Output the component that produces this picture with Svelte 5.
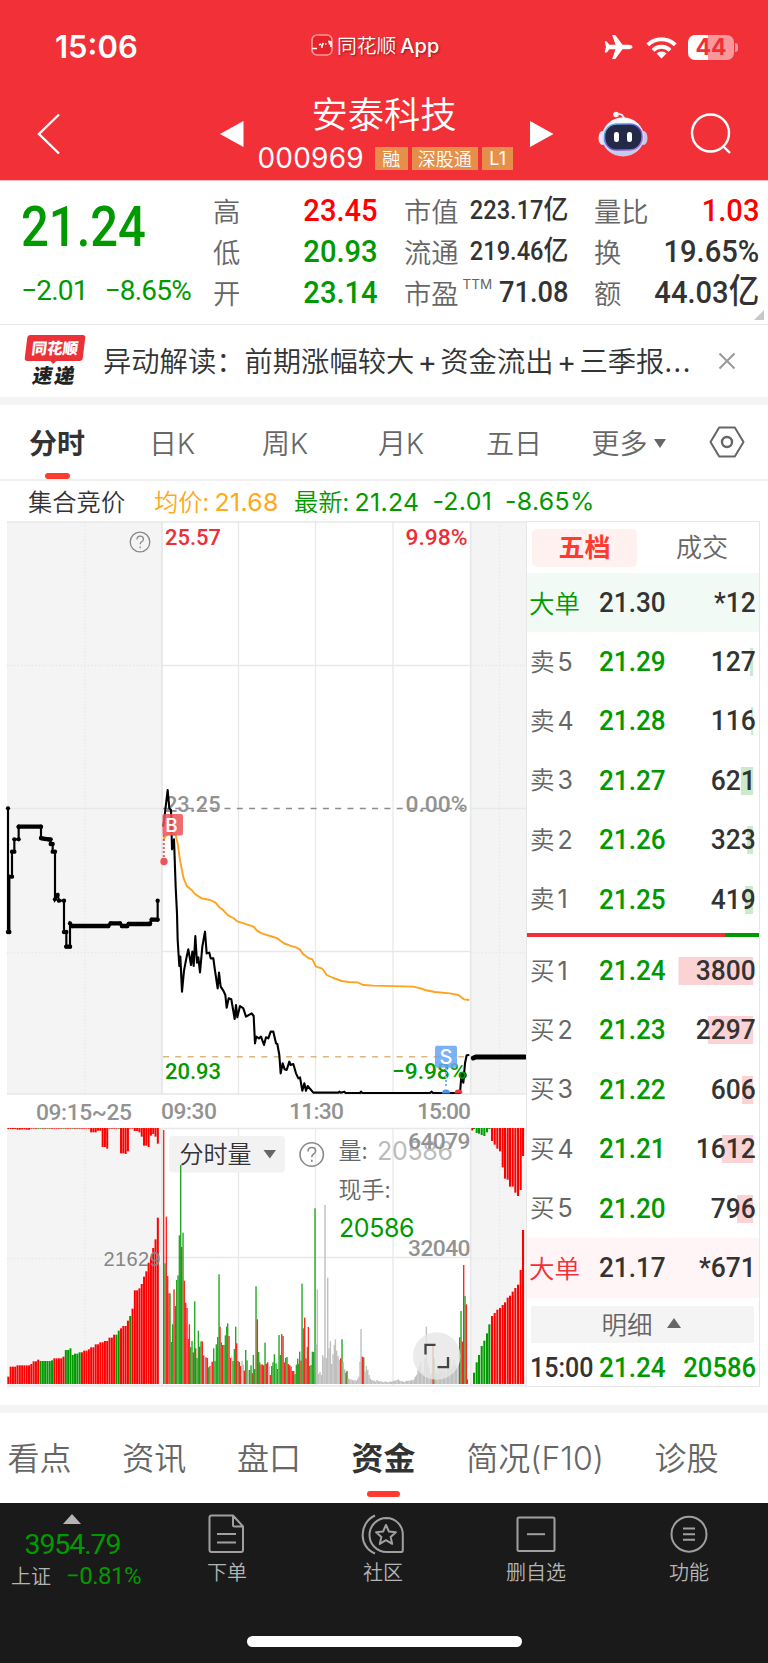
<script>
  const stats = [
    { label: '高', value: '23.45', tone: 'up' },
    { label: '市值', value: '223.17', unit: '亿', size: 'small' },
    { label: '量比', value: '1.03', tone: 'up' },
    { label: '低', value: '20.93', tone: 'down' },
    { label: '流通', value: '219.46', unit: '亿', size: 'small' },
    { label: '换', value: '19.65%' },
    { label: '开', value: '23.14', tone: 'down' },
    { label: '市盈', sup: 'TTM', value: '71.08', size: 'medium' },
    { label: '额', value: '44.03', unit: '亿' }
  ];

  const periods = ['分时', '日K', '周K', '月K', '五日'];

  const asks = [
    { level: 5, price: '21.29', volume: 127, depth: 3 },
    { level: 4, price: '21.28', volume: 116, depth: 2 },
    { level: 3, price: '21.27', volume: 621, depth: 12 },
    { level: 2, price: '21.26', volume: 323, depth: 6 },
    { level: 1, price: '21.25', volume: 419, depth: 8 }
  ];

  const bids = [
    { level: 1, price: '21.24', volume: 3800, depth: 74 },
    { level: 2, price: '21.23', volume: 2297, depth: 45 },
    { level: 3, price: '21.22', volume: 606, depth: 11 },
    { level: 4, price: '21.21', volume: 1612, depth: 31 },
    { level: 5, price: '21.20', volume: 796, depth: 16 }
  ];

  const sections = ['看点', '资讯', '盘口', '资金', '简况(F10)', '诊股'];

  // Chart series are stored in 3x units, the groups that draw them scale back down
  const auctionLine =
    '24,85 24,456 28,456 28,290 36,290 36,215 43,215 43,178 56,178 56,140 123,140 123,174 145,178 152,178 152,192 158,192 158,215 165,215 165,358 173,345 177,362 192,362 192,456 199,456 199,500 210,500 210,430 217,438 325,438 332,430 360,430 366,438 380,438 386,432 450,430 455,419 473,419 473,362';
  const auctionDots = auctionLine.split(' ').map((p) => p.split(','));

  const priceLine =
    '490,140 503,30 508,85 513,90 516,208 522,178 527,320 531,400 533,480 538,558 541,530 546,635 552,572 560,530 565,508 573,555 577,515 581,558 586,468 591,548 595,532 600,577 607,500 615,455 620,520 628,518 632,535 640,535 645,572 653,625 657,578 662,620 670,632 676,645 680,683 686,655 694,658 704,717 708,675 712,712 720,678 730,685 738,710 755,700 761,708 765,790 769,770 777,775 783,770 792,795 798,772 805,775 812,755 820,755 828,790 832,792 838,825 842,880 848,850 854,868 860,870 868,845 872,855 880,852 888,880 895,895 900,892 907,932 913,910 918,932 923,918 940,938 1015,938 1018,935 1022,938 1033,935 1037,939 1080,939 1083,935 1087,939 1290,939 1295,935 1299,939 1380,939 1384,890 1390,908 1395,850 1400,826 1408,825';
  const averageLine =
    '490,178 500,165 510,160 527,165 533,190 540,240 550,292 560,318 575,330 585,342 605,355 630,360 647,368 658,382 670,391 684,406 700,414 712,424 740,433 761,440 770,451 785,460 820,471 832,475 850,489 870,497 890,503 900,509 910,523 925,534 937,538 948,560 967,566 980,585 1000,594 1025,603 1045,606 1073,607 1090,615 1120,617 1240,620 1265,626 1275,630 1305,636 1350,640 1375,645 1392,658 1408,660';

  // "<x><colour><top>": r = up, g = down, x = flat
  const volumeData =
    '491r60 495g460 499r320 503r498 507r550 510g550 514g696 518g643 522r538 526r588 530g510 534g496 538g376 542g165 545r411 549g368 553r512 557r578 561r594 565r687 568r643 572g711 576g693 580r727 584g574 587r715 591g744 595g662 599r710 603g694 607r694 611r736 614x740 618r742 622r744 626g772 630r768 634x757 637r755 641g715 645g753 649g703 653g681 657g493 660r650 664g697 668r705 672g705 676g676 680g650 683g640 687r678 691r744 695x740 699g753 703g717 707g650 710r700 714g753 718r756 722r768 726x752 730x764 733r782 737g720 741g751 745x780 749g780 753g766 757r790 760g735 764g777 768g529 772r628 776g726 779g757 783r764 787r763 791r766 795g698 799r761 803r757 807x770 811r795 815g768 819g757 823g733 828g760 832g777 837g675 841g735 845g672 849r678 853r757 857g744 861g741 865r762 869r766 873r770 877r783 881r783 885g792 889g764 893g746 896g762 899g725 903r752 906g521 910g655 914r623 918r745 922g711 925r651 929g768 933g765 937g725 941g726 945g295 949x702 952x538 956x792 960x786 964x795 968x736 972x742 975x285 979x744 983x503 987x715 991x694 995x762 999x733 1003x705 1006x688 1010x722 1014x738 1018x750 1022r745 1026g688 1030x757 1034x778 1038r788 1041g783 1045x805 1049x808 1053x808 1057x810 1061x811 1065x811 1069x812 1073x806 1077x800 1080x755 1083x657 1087r740 1091g742 1095x785 1099x768 1103x780 1107x795 1111x806 1115x810 1119x812 1123x812 1127x815 1131x810 1135x813 1139x815 1143x813 1147x816 1151x817 1155x814 1159x815 1163x817 1167x816 1171x814 1175x816 1179x813 1183x812 1187x812 1191x810 1195x808 1199x812 1203x814 1207x813 1211x816 1215x815 1219x812 1223x813 1227x812 1231x812 1235x810 1239x811 1243x808 1246x800 1250x795 1254x780 1258x768 1262x755 1266x785 1270x790 1274x745 1279x650 1283x760 1287x775 1291x795 1295x790 1299r705 1302g745 1306x790 1310x780 1314x790 1318x765 1322x782 1326x770 1330x785 1334x776 1338x790 1342x766 1346x752 1350x745 1354x778 1358x765 1362x750 1366x765 1370x772 1375x765 1379r682 1383g603 1387r695 1391r465 1395g558 1399r583 1402r808';
  const parse = (data) =>
    data.split(' ').map((item) => {
      const [, x, tone, y] = item.match(/(\d+)([rgx])(\d+)/);
      return { x: +x, tone, y: +y };
    });
  const volumes = parse(volumeData);

  const auctionSteps = [
    [22, 800], [25, 770], [46, 766], [88, 762], [94, 754], [107, 749], [116, 753], [149, 751], [156, 745], [182, 740], [190, 720], [204, 715], [210, 735], [217, 731], [231, 727], [245, 722], [258, 718], [271, 712], [285, 703], [298, 697], [312, 693], [326, 683], [340, 674], [350, 662], [360, 655], [368, 648], [375, 632], [382, 618], [394, 596], [402, 541], [412, 535], [420, 522], [429, 500], [436, 484], [443, 458], [450, 440], [456, 414], [463, 388], [470, 323]
  ];
  const greenRanges = [[113, 147], [153, 159], [189, 209], [214, 238], [346, 360], [381, 388]];
  const topSteps = [
    [22, 57], [50, 59], [64, 58], [78, 59], [92, 56], [265, 67], [292, 62], [300, 111], [314, 116], [326, 56], [361, 130], [369, 132], [376, 124], [383, 56], [402, 63], [411, 67], [423, 80], [430, 107], [443, 111], [449, 77], [457, 72], [464, 80], [470, 101]
  ];
  const stepAt = (steps, x) => steps.filter((s) => s[0] <= x + 1).pop()[1];
  const auctionBars = Array.from({ length: 66 }, (_, i) => {
    const x = 22 + i * 6.9;
    return {
      x,
      y: stepAt(auctionSteps, x),
      top: stepAt(topSteps, x),
      green: greenRanges.some(([a, b]) => x >= a && x < b),
      topGreen: [13, 14, 17, 24, 28, 48].includes(i)
    };
  });

  const closeBottom = parse(
    '1422g788 1430g757 1437g735 1445g708 1453g692 1461g670 1468g643 1476r618 1484r609 1492r599 1500r594 1508r585 1515r577 1523r563 1530r557 1538r545 1546r534 1554r524 1562r480 1569r360'
  );
  const closeTop = parse(
    '1417r61 1422g57 1430g69 1437g71 1445g75 1453g78 1461g67 1468g57 1476r93 1484r104 1492r116 1500r124 1508r172 1515r206 1523r209 1530r230 1538r230 1546r248 1554r258 1562r240 1569r138'
  );
</script>

<div class="page">
  <header>
    <div class="status">
      <span class="clock">15:06</span>
      <div class="brand">
        <svg width="22" height="22" viewBox="0 0 22 22">
          <rect x="1" y="1" width="20" height="20" rx="5" fill="#e8222b" stroke="#f99" stroke-width="1.6" />
          <path d="M1 14.500h5M8 11l2-1M11 11.500l1.500-2.500M11 11v3M14 10h1.500M17 7.500h1.500v3M20 7v6" stroke="#fff" stroke-width="1.600" fill="none" />
        </svg>
        <span>同花顺<b>App</b></span>
      </div>
      <div class="signals">
        <svg width="29" height="26" viewBox="0 0 29 26" fill="#fff">
          <path d="M28.5 13c0 1.4-2 2.2-4 2.2h-6L11.3 25H8.2l3.3-9.8H5.3L2.8 18.4H.7L2 13 .7 7.6h2.1l2.5 3.2h6.2L8.2 1h3.1l7.2 9.8h6c2 0 4 .8 4 2.2z" />
        </svg>
        <svg width="31" height="23" viewBox="0 0 31 23" fill="none" stroke="#fff" stroke-width="4">
          <path d="M1.8 8.8a19.4 19.4 0 0 1 27.4 0" />
          <path d="M7 14.4a12 12 0 0 1 17 0" />
          <path d="M15.5 22.5l-5-5a7 7 0 0 1 10 0z" fill="#fff" stroke="none" />
        </svg>
        <div class="battery"><span>44</span></div>
      </div>
    </div>
    <nav>
      <svg class="back" width="24" height="42" viewBox="0 0 24 42" fill="none" stroke="#fff" stroke-width="2.4">
        <path d="M22 1.5L2 21l20 19.500" />
      </svg>
      <svg width="24" height="26" viewBox="0 0 24 26"><path d="M0 13L23.500 0v26z" fill="#fff" /></svg>
      <div class="title">
        <h1>安泰科技</h1>
        <div class="code">
          <span>000969</span>
          <i>融</i><i>深股通</i><i>L1</i>
        </div>
      </div>
      <svg width="24" height="26" viewBox="0 0 24 26"><path d="M23.500 13L0 0v26z" fill="#fff" /></svg>
      <svg class="robot" width="50" height="46" viewBox="0 0 50 46">
        <defs>
          <linearGradient id="shell" x1="0" y1="0" x2="0" y2="1">
            <stop offset="0" stop-color="#fff" />
            <stop offset="1" stop-color="#c3c8ea" />
          </linearGradient>
          <linearGradient id="rim" x1="0" y1="0" x2="1" y2="1">
            <stop offset="0" stop-color="#62c8e8" />
            <stop offset=".6" stop-color="#6a4be0" />
            <stop offset="1" stop-color="#b48cf0" />
          </linearGradient>
        </defs>
        <path d="M18 3q8-1 8 6" fill="none" stroke="#e4e4f4" stroke-width="2" />
        <circle cx="18" cy="3.500" r="2.800" fill="#f2f0fa" />
        <ellipse cx="4.500" cy="27" rx="4" ry="7" fill="#e6e8fa" />
        <ellipse cx="45.500" cy="27" rx="4" ry="7" fill="#c5caee" />
        <ellipse cx="25" cy="26" rx="21" ry="19.500" fill="url(#shell)" />
        <rect x="6.500" y="13" width="37.500" height="26" rx="12" fill="#232946" stroke="url(#rim)" stroke-width="1.600" />
        <rect x="16" y="21" width="5" height="10" rx="2.300" fill="#fff" />
        <rect x="29" y="21" width="5" height="10" rx="2.300" fill="#fff" />
      </svg>
      <svg class="search" width="42" height="42" viewBox="0 0 42 42" fill="none" stroke="#fff" stroke-width="2.400">
        <circle cx="20.500" cy="20" r="18.500" />
        <path d="M33 33l7 7" />
      </svg>
    </nav>
  </header>

  <section class="quote">
    <div class="last down">
      <strong>21.24</strong>
      <div><span>−2.01</span><span>−8.65%</span></div>
    </div>
    <div class="stats">
      {#each stats as stat}
        <div class="stat">
          <label>{stat.label}{#if stat.sup}<sup>{stat.sup}</sup>{/if}</label>
          <span class="num {stat.tone ?? ''} {stat.size ?? ''}">{stat.value}{#if stat.unit}<em>{stat.unit}</em>{/if}</span>
        </div>
      {/each}
    </div>
    <svg class="corner" width="10" height="10" viewBox="0 0 10 10"><path d="M10 0v10H0z" fill="#c8c8c8" /></svg>
  </section>

  <section class="news">
    <div class="express">
      <div class="bubble"><span>同花顺</span></div>
      <b>速递</b>
    </div>
    <p>异动解读：前期涨幅较大<i>+</i>资金流出<i>+</i>三季报<u>...</u></p>
    <svg width="18" height="18" viewBox="0 0 18 18" stroke="#999" stroke-width="2"><path d="M1.500 1.500l15 15M16.500 1.500l-15 15" /></svg>
  </section>

  <section class="periods">
    {#each periods as period, i}
      <div class="period" class:active={i === 0}>{period}</div>
    {/each}
    <div class="period">更多<svg width="12" height="9" viewBox="0 0 12 9"><path d="M0 0h12L6 9z" fill="#666" /></svg></div>
    <div class="period">
      <svg class="gear" width="36" height="32" viewBox="0 0 36 32" fill="none" stroke="#666" stroke-width="2">
        <path d="M10.200 1.500h15.600L34.500 16l-8.700 14.500H10.200L1.500 16z" stroke-linejoin="round" />
        <circle cx="18" cy="16" r="5" stroke-width="2.400" />
      </svg>
    </div>
  </section>

  <div class="legend">
    <span class="mode">集合竞价</span>
    <span class="avg">均价: <b>21.68</b></span>
    <span class="down">最新: <b>21.24</b></span>
    <b class="down">-2.01</b>
    <b class="down">-8.65%</b>
  </div>

  <section class="market">
    <svg class="chart" width="526" height="868" viewBox="0 521 526 868">
      <!-- panels and grid -->
      <g fill="#f4f4f4">
        <rect x="7" y="522" width="155" height="572" />
        <rect x="471" y="522" width="55" height="572" />
        <rect x="7" y="1128" width="155" height="257" />
        <rect x="471" y="1128" width="55" height="257" />
      </g>
      <g stroke="#e8e8e8" stroke-width="1.300" fill="none">
        <path d="M7 522H526M162 665.500H470M7 808.500H162M471 808.500H526M162 951.500H470M7 1094H526" />
        <path d="M7 1128.500H526M162 1257.500H470M7 1386H526" />
        <path d="M238.500 522V1094M315.500 522V1094M393 522V1094M238.500 1128V1386M315.500 1128V1386M393 1128V1386" />
        <path d="M162 522V1094M470.700 522V1094M162 1128V1386M470.700 1128V1386" stroke-width="1.800" />
        <path d="M85 522V1096M499.500 522V1096M7 665.500H162M471 665.500H526M7 952.500H162M471 952.500H526M85 1128V1386M499.500 1128V1386M7 1258.500H162M471 1258.500H526" stroke-dasharray="1.500 2" />
      </g>
      <path d="M163 808.500H470" stroke="#8c8c8c" stroke-width="1.300" stroke-dasharray="6 6.300" />
      <path d="M163 1056.700H470" stroke="#dfb57f" stroke-width="1.500" stroke-dasharray="6 6.300" />

      <g class="din" font-size="22.800">
        <text class="red" x="165" y="545" textLength="56" lengthAdjust="spacingAndGlyphs">25.57</text>
        <text class="red" x="405.500" y="545" textLength="62" lengthAdjust="spacingAndGlyphs">9.98%</text>
        <text class="axis" x="165" y="812" textLength="55.500" lengthAdjust="spacingAndGlyphs">23.25</text>
        <text class="axis" x="405.500" y="812" textLength="62" lengthAdjust="spacingAndGlyphs">0.00%</text>
        <text class="axis" x="36" y="1120" textLength="96">09:15~25</text>
        <text class="axis" x="161" y="1119" textLength="56">09:30</text>
        <text class="axis" x="289" y="1119" textLength="55">11:30</text>
        <text class="axis" x="417" y="1119" textLength="54">15:00</text>
      </g>

      <!-- price lines -->
      <g transform="translate(0 780) scale(.33333)">
        <polyline points={auctionLine} fill="none" stroke="#000" stroke-width="6.500" />
        {#each auctionDots as [x, y]}
          <circle cx={x} cy={y} r="6.500" />
        {/each}
        <path d="M56 140H122M199 500H210M215 438H325M332 430H360M366 438H382M386 432H450M455 419H472M125 175L150 179" stroke="#000" stroke-width="13" stroke-linecap="round" />
        <path d="M1420 834L1428 831H1574" fill="none" stroke="#000" stroke-width="15" stroke-linecap="round" />
        <polyline points={priceLine} fill="none" stroke="#000" stroke-width="6.300" stroke-linejoin="round" />
        <polyline points={averageLine} fill="none" stroke="#ffa21f" stroke-width="5.700" stroke-linejoin="round" />
        <circle cx="1390" cy="886" r="10" fill="#031" />
      </g>
      <g class="din" font-size="22.800">
        <text class="green" x="165" y="1079" textLength="56" lengthAdjust="spacingAndGlyphs">20.93</text>
        <text class="green" x="392" y="1079" textLength="74.500">−9.98%</text>
      </g>

      <!-- trade marks -->
      <path d="M163.800 835V857" stroke="#ee5558" stroke-width="2" stroke-dasharray="2 2" />
      <circle cx="164" cy="861.500" r="3.700" fill="#ee5558" />
      <rect x="162.500" y="814" width="20.500" height="21.500" rx="2" fill="#ec5357" opacity=".86" />
      <text class="mark" x="171.500" y="832" font-size="19">B</text>
      <path d="M446 1068V1088" stroke="#7ab0f5" stroke-width="2" stroke-dasharray="2 2" />
      <path d="M442 1093.500a4 4 0 0 1 8 0z" fill="#4e8fe6" />
      <path d="M454.500 1093.500a4 4 0 0 1 8 0z" fill="#e03a3e" />
      <rect x="435" y="1045.700" width="22" height="22" rx="2" fill="#67a4f3" opacity=".86" />
      <text class="mark" x="446" y="1064" font-size="20">S</text>

      <g fill="none" stroke="#888" stroke-width="1.300">
        <circle cx="140" cy="542" r="9.800" />
        <path d="M137 539.500q0-3.300 3.200-3.300t3.200 3q0 1.700-1.900 2.600-1.300.7-1.300 2.400M140.200 546.500v1.700" />
      </g>

      <!-- volume -->
      <rect x="169" y="1136" width="116" height="36.500" rx="4" fill="#f2f2f2" />
      <text class="cjk" x="179.500" y="1163" font-size="24" fill="#333">分时量</text>
      <path d="M263.500 1150h12.500l-6.200 8.500z" fill="#666" />
      <g transform="translate(0 1110) scale(.33333)">
        {#each auctionBars as bar}
          <rect class={bar.green ? 'g' : 'r'} x={bar.x} y={bar.y} width="6" height={822 - bar.y} />
          <rect class={bar.topGreen ? 'g' : 'r'} x={bar.x} y="54" width="6" height={bar.top - 54} />
        {/each}
        <g opacity=".85">
          {#each volumes as bar}
            <rect class={bar.tone} x={bar.x - 2} y={bar.y} width="4.200" height={822 - bar.y} />
          {/each}
        </g>
        {#each closeBottom as bar}
          <rect class={bar.tone} x={bar.x - 3} y={bar.y} width="6.200" height={822 - bar.y} />
        {/each}
        {#each closeTop as bar}
          <rect class={bar.tone} x={bar.x - 3} y="54" width="6.200" height={bar.y - 54} />
        {/each}
      </g>
      <text x="103.500" y="1265.500" class="helv" font-size="20" textLength="57">21629</text>
      <g fill="none" stroke="#888" stroke-width="1.600">
        <circle cx="311.700" cy="1154.500" r="11.700" />
        <path d="M308 1151.500q0-4 3.800-4t3.800 3.600q0 2-2.300 3.200-1.500.8-1.500 2.900M311.800 1159.700v2.200" />
      </g>
      <g class="cjk" font-size="23" fill="#666">
        <text x="338.500" y="1159">量:</text>
        <text x="338.500" y="1198">现手:</text>
      </g>
      <g class="inter" font-size="25">
        <text x="377" y="1159.500" fill="#bbb" textLength="76">20586</text>
        <text x="339" y="1237" fill="#090" textLength="75.500">20586</text>
      </g>
      <g class="din axis" font-size="22.800">
        <text x="408" y="1148.500" textLength="62.500">64079</text>
        <text x="408" y="1255.500" textLength="62.500">32040</text>
      </g>
      <circle cx="436.700" cy="1356" r="23.800" fill="#e6e6e6" opacity=".82" />
      <path d="M425.500 1354.500V1344.800H435.500M448 1357V1367.200H437.500" fill="none" stroke="#444" stroke-width="2.300" />
    </svg>

    <div class="book">
      <div class="book-tabs"><b>五档</b><span>成交</span></div>
      <div class="row big sell">
        <span class="cn">大单</span><span class="price">21.30</span><span class="vol">*12</span>
      </div>
      {#each asks as row}
        <div class="row ask">
          <span class="cn">卖<b>{row.level}</b></span><span class="price">{row.price}</span>
          <span class="vol"><i style="width: {row.depth}px"></i>{row.volume}</span>
        </div>
      {/each}
      <div class="ratio"><i></i></div>
      {#each bids as row}
        <div class="row bid">
          <span class="cn">买<b>{row.level}</b></span><span class="price">{row.price}</span>
          <span class="vol"><i style="width: {row.depth}px"></i>{row.volume}</span>
        </div>
      {/each}
      <div class="row big buy">
        <span class="cn">大单</span><span class="price">21.17</span><span class="vol">*671</span>
      </div>
      <div class="detail">明细<svg width="14" height="10" viewBox="0 0 14 10"><path d="M0 10h14L7 0z" fill="#666" /></svg></div>
      <div class="tick"><span>15:00</span><span class="down price">21.24</span><span class="down end">20586</span></div>
    </div>
  </section>

  <section class="sections">
    {#each sections as name}
      <div class:active={name === '资金'}>{name}</div>
    {/each}
  </section>

  <footer>
    <div class="toolbar">
      <div class="index">
        <svg width="18" height="10" viewBox="0 0 18 10"><path d="M0 10h18L9 0z" fill="#b5b5b5" /></svg>
        <strong>3954.79</strong>
        <div><span>上证</span><b>−0.81%</b></div>
      </div>
      <div class="tool">
        <svg width="42" height="42" viewBox="0 0 42 42">
          <path d="M5.500 2.500H27l10 11V37q0 2-2 2H5.500q-2 0-2-2V4.500q0-2 2-2zM27 2.500V12q0 1.500 1.500 1.500H37M11 21h19M11 29.500h19" />
        </svg>
        下单
      </div>
      <div class="tool">
        <svg width="46" height="42" viewBox="0 0 46 42">
          <path d="M26.500 5a17 17 0 0 0 0 34H41q1.800 0 1.800-1.800V21.500A16.500 16.500 0 0 0 26.500 5zM15 2.500C-1.500 10-1.500 34 15 40.500" />
          <path d="M26 12l2.900 6.500 7 .7-5.300 4.700 1.600 7-6.200-3.700-6.200 3.700 1.600-7-5.300-4.700 7-.7z" stroke-width="2" />
        </svg>
        社区
      </div>
      <div class="tool">
        <svg width="42" height="42" viewBox="0 0 42 42">
          <rect x="2.500" y="4.500" width="37" height="33.500" rx="1.500" /><path d="M12 21.200h18" />
        </svg>
        删自选
      </div>
      <div class="tool">
        <svg width="42" height="42" viewBox="0 0 42 42">
          <circle cx="21" cy="21.200" r="17.500" /><path d="M15 15.500h12M15 21.200h12M15 26.800h12" />
        </svg>
        功能
      </div>
    </div>
    <div class="home"></div>
  </footer>
</div>

<style>
  :global(body) {
    background: #fff;
  }

  .page {
    width: 768px;
    height: 1663px;
    overflow: hidden;
    font-family: 'Noto Sans CJK SC', sans-serif;
    font-weight: 350;
    color: #333;
  }

  .page * {
    box-sizing: border-box;
  }

  i,
  em,
  u {
    font-style: normal;
    text-decoration: none;
  }

  .down {
    color: #090;
  }

  .up {
    color: #f00;
  }

  /* Header */
  header {
    height: 181px;
    background: #f23038;
    color: #fff;
    border-bottom: 1px solid #fbb;
  }

  .status {
    display: grid;
    grid-template-columns: 311px 293px 1fr;
    align-items: center;
    height: 94px;
  }

  .clock {
    padding-left: 55px;
    font: 600 31px/40px Inter, sans-serif;
  }

  .brand {
    display: flex;
    align-items: center;
    gap: 4px;
    font-size: 19.8px;
    line-height: 28px;
    padding-bottom: 4px;
    text-shadow: 1px 1px 2px rgba(90, 0, 0, 0.6);
  }

  .brand b {
    font: 500 20px/28px Inter, sans-serif;
    padding-left: 4px;
  }

  .signals {
    display: flex;
    align-items: center;
  }

  .signals svg + svg {
    margin-left: 13px;
  }

  .battery {
    position: relative;
    width: 46px;
    height: 25px;
    margin-left: 11px;
    border-radius: 7px;
    background: linear-gradient(90deg, #fff 44%, #f8989c 44%);
    color: #f23038;
    font: 700 23px/25px Inter, sans-serif;
    text-align: center;
  }

  .battery::after {
    content: '';
    position: absolute;
    right: -4px;
    top: 8px;
    width: 3px;
    height: 9px;
    border-radius: 0 3px 3px 0;
    background: #f8989c;
  }

  nav {
    display: grid;
    grid-template-columns: 220px 24px 286px 68px 92px 42px;
    grid-template-rows: 80px;
    align-items: center;
    height: 80px;
  }

  .back {
    margin-left: 37px;
  }

  .title {
    display: flex;
    flex-direction: column;
    align-items: center;
    padding: 0 3px 4.5px 0;
  }

  h1 {
    margin: 0 3px 6.5px 0;
    font-size: 36.3px;
    font-weight: 350;
    line-height: 46px;
  }

  .code {
    display: flex;
    align-items: center;
    gap: 4px;
    line-height: 34px;
  }

  .code span {
    font: 400 28px/34px Inter, sans-serif;
    letter-spacing: 0.2px;
    margin-right: 7px;
  }

  .code i {
    height: 23px;
    padding: 0 6px;
    background: #e68f4a;
    font-size: 18px;
    line-height: 22px;
  }

  .code i:first-of-type,
  .code i:last-of-type {
    padding: 0 7.5px;
  }

  .code i:last-of-type {
    font: 400 18px/23px Inter, sans-serif;
  }

  .robot {
    align-self: start;
    margin-top: 17px;
  }

  /* Quote */
  .quote {
    position: relative;
    display: flex;
    height: 144px;
    border-bottom: 1px solid #e9e9e9;
    font-family: Roboto, sans-serif;
    font-weight: 400;
  }

  .last {
    width: 213px;
    padding: 16px 0 0 21px;
    white-space: nowrap;
  }

  .last strong {
    display: block;
    font-size: 55px;
    font-weight: 500;
    line-height: 60px;
    transform: scaleX(0.89);
    transform-origin: left;
  }

  .last div {
    display: flex;
    gap: 17px;
    margin-top: 18px;
    font-size: 28px;
    line-height: 32px;
    letter-spacing: -0.8px;
  }

  .stats {
    display: grid;
    grid-template-columns: 165px 164px 165px;
    grid-template-rows: repeat(3, 41px);
    column-gap: 26px;
    padding-top: 8px;
  }

  .stat {
    display: flex;
    justify-content: space-between;
    align-items: center;
    white-space: nowrap;
  }

  .stat label {
    font: 350 27.3px/40px 'Noto Sans CJK SC', sans-serif;
    color: #666;
  }

  .stat sup {
    font: 400 13.5px/14px Inter, sans-serif;
    vertical-align: 15px;
    padding-left: 4px;
  }

  .num {
    font-size: 32px;
    font-weight: 500;
    line-height: 40px;
    transform: scaleX(0.91);
    transform-origin: right;
  }

  .num em {
    font-family: 'Noto Sans CJK SC', sans-serif;
    font-size: 1.05em;
    font-weight: 500;
    line-height: 1;
  }

  .num.small {
    font-size: 26px;
  }

  .num.medium {
    font-size: 30px;
  }

  .corner {
    position: absolute;
    right: 4px;
    bottom: 4px;
  }

  /* News strip */
  .news {
    display: flex;
    align-items: center;
    height: 72px;
    padding-left: 25px;
  }

  .express {
    width: 78px;
    height: 52px;
    color: #222;
  }

  .bubble {
    position: relative;
    width: 58px;
    height: 26px;
    margin-left: 1px;
    border-radius: 3px;
    background: #ea3238;
    color: #fff;
    transform: skewX(-7deg);
    font-size: 15.5px;
    font-weight: 900;
    line-height: 25px;
    text-align: center;
  }

  .bubble::after {
    content: '';
    position: absolute;
    left: 25px;
    top: 25px;
    border: 4px solid transparent;
    border-top-color: #ea3238;
  }

  .express b {
    display: block;
    width: 60px;
    font-size: 20px;
    font-weight: 900;
    line-height: 27px;
    letter-spacing: 2px;
    text-align: center;
    transform: skewX(-10deg);
  }

  .news p {
    width: 615px;
    margin: 0;
    font-size: 28.3px;
    line-height: 40px;
    white-space: nowrap;
  }

  .news p i {
    display: inline-block;
    width: 26px;
    font: 400 29px/40px Inter, sans-serif;
    text-align: center;
  }

  .news p u {
    letter-spacing: 1.6px;
  }

  /* Period tabs */
  .periods {
    display: grid;
    grid-template-columns: 114px 116px 110px 122px 104px 125px 72px;
    height: 84px;
    border-top: 8px solid #f4f4f4;
    border-bottom: 2px solid #f0f0f0;
  }

  .period {
    position: relative;
    display: flex;
    align-items: center;
    justify-content: center;
    padding-top: 3px;
    font: 350 28px/40px Inter, 'Noto Sans CJK SC', sans-serif;
    color: #666;
  }

  .period svg:not(.gear) {
    margin-left: 6px;
  }

  .gear {
    margin-top: -3px;
  }

  .active {
    position: relative;
    color: #333;
    font-weight: 700;
  }

  .active::after {
    content: '';
    position: absolute;
    left: 45px;
    bottom: 0;
    width: 25px;
    height: 6px;
    border-radius: 3px;
    background: #ff3b30;
  }

  /* Legend */
  .legend {
    display: flex;
    align-items: center;
    height: 40px;
    padding-left: 28px;
    font-size: 24.3px;
    line-height: 40px;
    white-space: nowrap;
  }

  .legend b {
    font: 400 24.8px/40px Inter, sans-serif;
    letter-spacing: 0.35px;
  }

  .mode {
    width: 126px;
  }

  .avg {
    width: 140px;
    color: #ffa81c;
  }

  .legend > b,
  .avg + .down {
    margin-right: 13px;
  }

  /* Chart and order book */
  .market {
    display: flex;
    height: 868px;
  }

  .chart {
    flex: none;
    display: block;
  }

  .din {
    font-family: Roboto, sans-serif;
    font-weight: 500;
  }

  .inter {
    font-family: Inter, sans-serif;
    font-weight: 400;
  }

  .helv {
    font-family: 'Liberation Sans', sans-serif;
    fill: #858585;
  }

  .cjk {
    font-family: 'Noto Sans CJK SC', sans-serif;
  }

  .mark {
    font-family: Inter, sans-serif;
    font-weight: 500;
    fill: #fff;
    text-anchor: middle;
  }

  .axis {
    fill: #929292;
  }

  .red {
    fill: #ee2d35;
  }

  .green {
    fill: #090;
  }

  .r {
    fill: #f00;
  }

  .g {
    fill: #090;
  }

  .x {
    fill: #b4b4b4;
  }

  .book {
    width: 234px;
    height: 866px;
    border: 1.5px solid #e6e6e6;
    font-family: Roboto, sans-serif;
  }

  .book-tabs {
    display: flex;
    align-items: center;
    height: 51px;
    padding: 0 4px 0 5px;
    font: 350 26px/36px 'Noto Sans CJK SC', sans-serif;
    color: #666;
  }

  .book-tabs b {
    width: 105px;
    height: 38px;
    border-radius: 5px;
    background: #fff1f0;
    color: #ff3b30;
    font-weight: 700;
    line-height: 34px;
    text-align: center;
  }

  .book-tabs span {
    flex: 1;
    padding: 0 0 4px 12px;
    text-align: center;
  }

  .row {
    display: flex;
    align-items: center;
    height: 59.4px;
    padding: 0 3px 0 3px;
    font-size: 27.5px;
    font-weight: 500;
    line-height: 40px;
  }

  .cn {
    width: 69px;
    font: 350 24.5px/40px 'Noto Sans CJK SC', sans-serif;
    color: #666;
    padding-bottom: 2px;
  }

  .cn b {
    margin-left: 3px;
    font: 400 25px/40px Inter, sans-serif;
  }

  .big .cn {
    margin-left: -1px;
    width: 70px;
    font-size: 25.5px;
  }

  .price {
    transform: scaleX(0.95);
    transform-origin: left;
  }

  .sell {
    background: #f2faf6;
  }

  .sell .cn,
  .ask .price,
  .bid .price {
    color: #090;
  }

  .buy {
    background: #fff5f6;
  }

  .buy .cn {
    color: #f23038;
  }

  .vol {
    position: relative;
    flex: 1;
    text-align: right;
    transform: scaleX(0.96);
    transform-origin: right;
    z-index: 0;
  }

  .vol i {
    position: absolute;
    right: 3px;
    top: 6px;
    height: 28px;
    transform: scaleX(1.05);
    transform-origin: right;
    z-index: -1;
  }

  .ask i {
    background: #cbeacb;
  }

  .bid i {
    background: #fbd3d5;
  }

  .ratio {
    height: 12px;
    padding-top: 4px;
  }

  .ratio i {
    display: block;
    height: 4px;
    background: linear-gradient(90deg, #f03038 85.5%, #090 85.5%);
  }

  .detail {
    display: flex;
    align-items: center;
    justify-content: center;
    gap: 14px;
    height: 37px;
    margin: 8px 5px 0 4px;
    padding: 0 3px 3px 0;
    background: #f4f4f4;
    color: #666;
    font: 350 25.5px/34px 'Noto Sans CJK SC', sans-serif;
  }

  .tick {
    display: grid;
    grid-template-columns: 69px 70px 1fr;
    padding: 5px 3px 0 3px;
    font-size: 27.5px;
    font-weight: 500;
    line-height: 40px;
  }

  .tick span:first-child {
    justify-self: start;
    transform: scaleX(0.91);
    transform-origin: left;
  }

  .tick .end {
    text-align: right;
    transform: scaleX(0.93);
    transform-origin: right;
  }

  /* Section tabs */
  .sections {
    display: flex;
    gap: 50.7px;
    height: 114px;
    padding: 46px 0 0 7.5px;
    background: linear-gradient(#fff 16px, #f4f4f4 16px, #f4f4f4 24px, #fff 24px);
    font: 350 32px/48px Inter, 'Noto Sans CJK SC', sans-serif;
    color: #666;
    white-space: nowrap;
  }

  .sections .active::after {
    left: 15px;
    bottom: 6px;
    width: 33px;
  }

  /* Bottom bar */
  footer {
    height: 160px;
    background: #1a1a1a;
    color: #b5b5b5;
  }

  .toolbar {
    display: grid;
    grid-template-columns: 150px 154px 158px 148px 158px;
    height: 133px;
  }

  .index {
    display: flex;
    flex-direction: column;
    align-items: center;
    padding-top: 11px;
    font-size: 20px;
    color: #b5b5b5;
  }

  .index svg {
    margin-right: 6px;
  }

  .index strong {
    margin: 4px 5px 0 0;
    font: 400 28.5px/34px Roboto, sans-serif;
    letter-spacing: -1.1px;
    color: #090;
  }

  .index div {
    display: flex;
    gap: 15px;
    padding-left: 2px;
    line-height: 28px;
  }

  .index b {
    font: 400 24px/28px Roboto, sans-serif;
    letter-spacing: -0.5px;
    color: #090;
  }

  .tool {
    display: flex;
    flex-direction: column;
    align-items: center;
    gap: 1px;
    padding-top: 9.5px;
    font-size: 20px;
    line-height: 32px;
  }

  .tool svg {
    fill: none;
    stroke: #a0a0a0;
    stroke-width: 2;
    stroke-linejoin: round;
  }

  .home {
    width: 275px;
    height: 11px;
    margin: 0 auto;
    border-radius: 6px;
    background: #fff;
  }
</style>
